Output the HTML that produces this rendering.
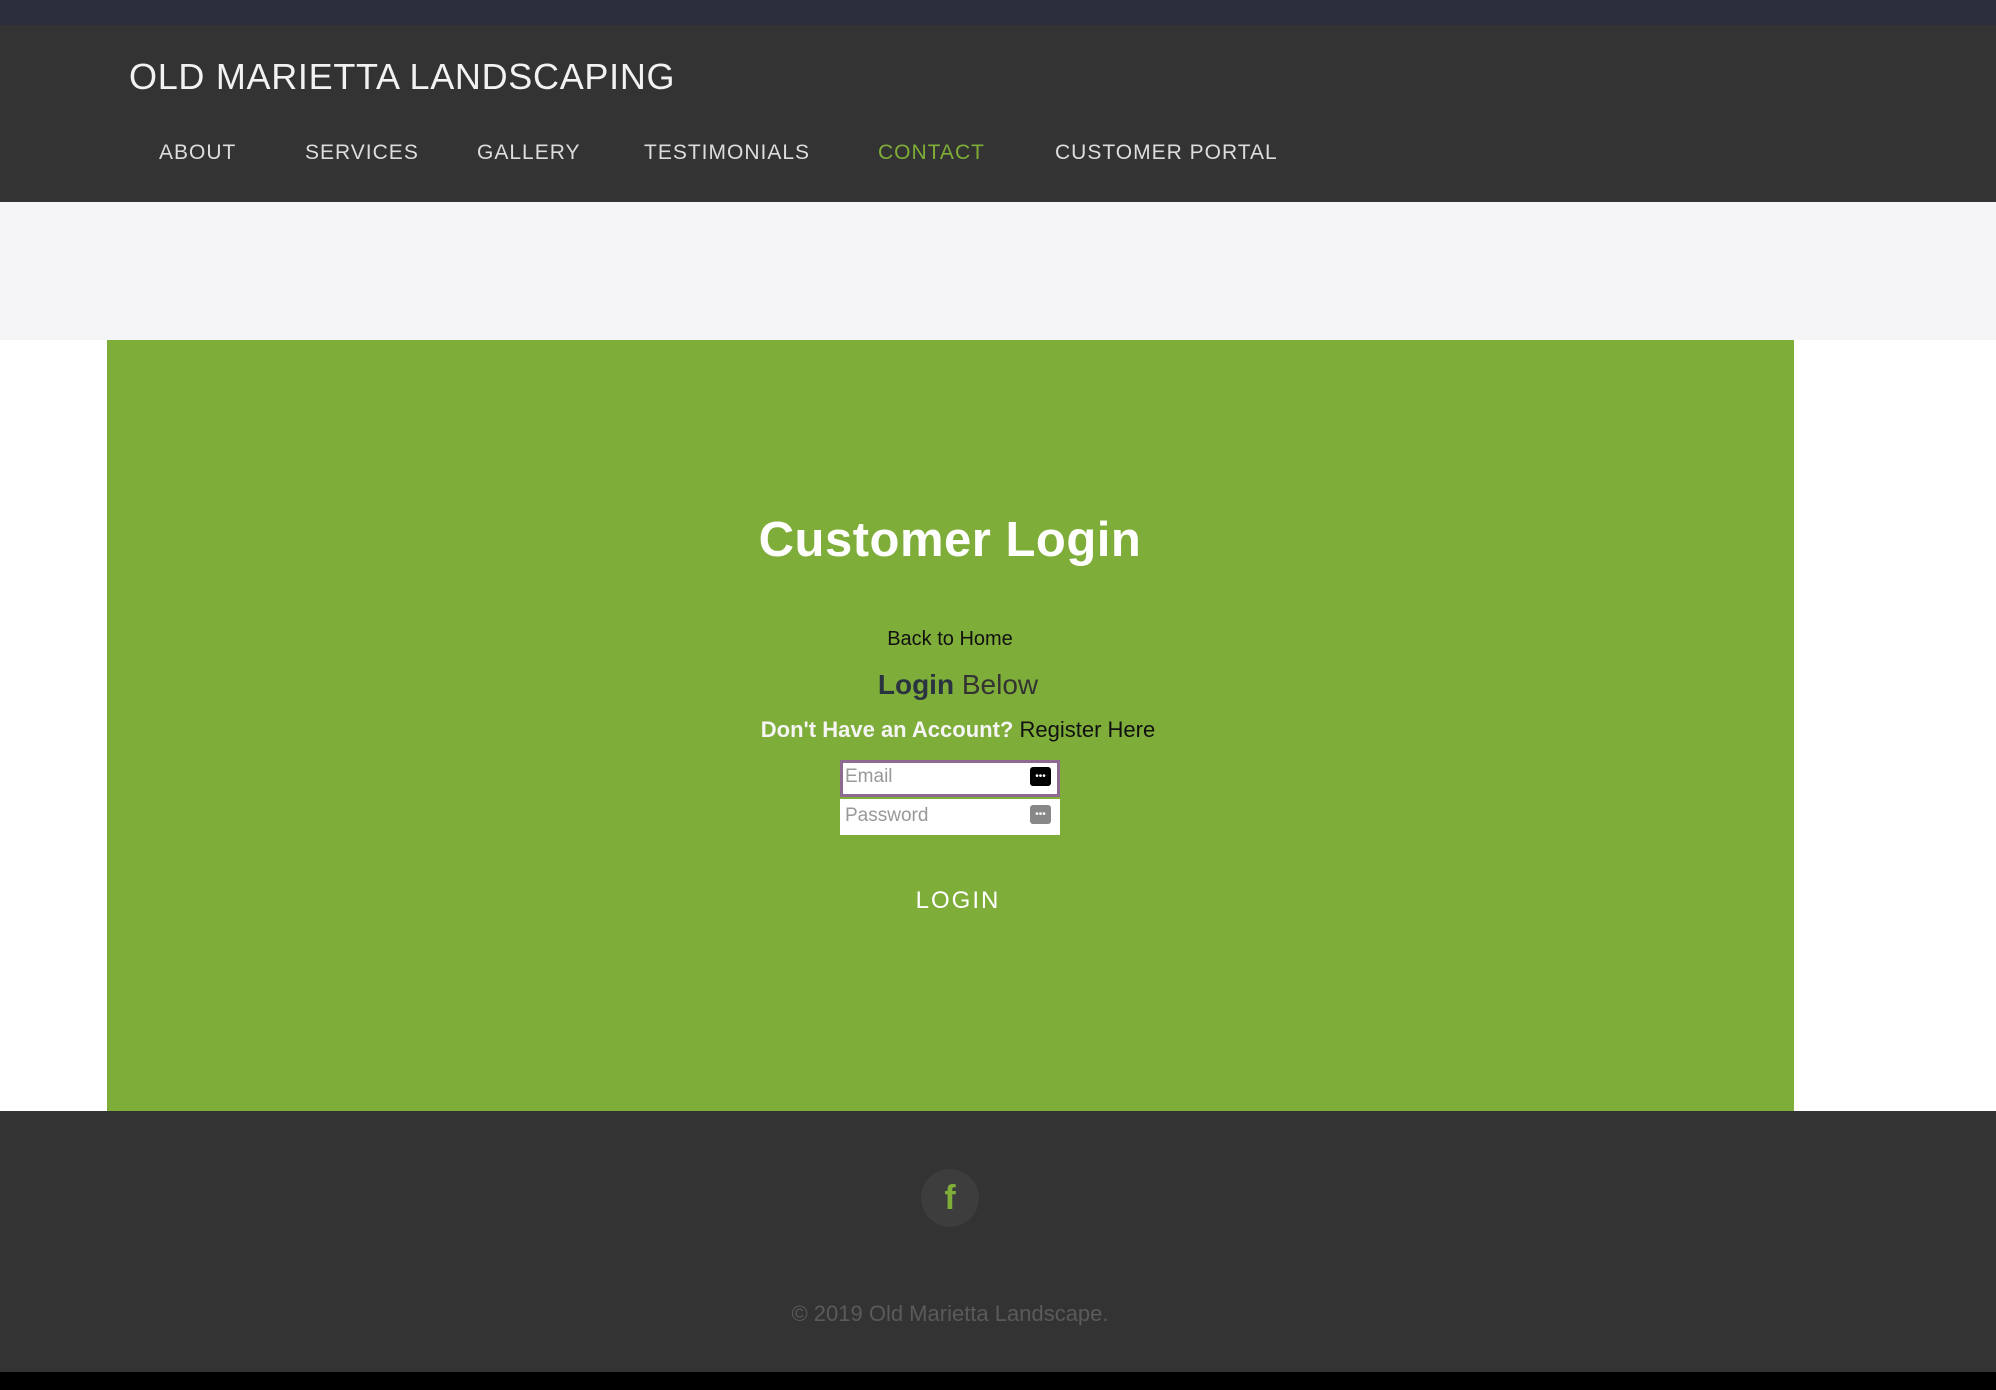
<!DOCTYPE html>
<html><head><meta charset="utf-8"><style>
*{margin:0;padding:0;box-sizing:border-box}
body{width:1996px;height:1390px;overflow:hidden;background:#fff;font-family:"Liberation Sans",sans-serif;position:relative}
.abs{position:absolute}
.c{position:absolute;left:0;width:1900px;text-align:center}
</style></head><body>
<div class="abs" style="left:0;top:0;width:1996px;height:25px;background:#2d2e3b"></div>
<div class="abs" style="left:0;top:25px;width:1996px;height:177px;background:#333"></div>
<div class="abs" style="left:129px;top:56px;color:#f2f2f2;font-size:36px;letter-spacing:0.7px;white-space:nowrap">OLD MARIETTA LANDSCAPING</div>
<div class="abs" style="top:141px;left:0;font-size:21px;letter-spacing:1px;color:#ddd;white-space:nowrap">
<span class="abs" style="left:159px">ABOUT</span>
<span class="abs" style="left:305px">SERVICES</span>
<span class="abs" style="left:477px">GALLERY</span>
<span class="abs" style="left:644px">TESTIMONIALS</span>
<span class="abs" style="left:878px;color:#7fae38">CONTACT</span>
<span class="abs" style="left:1055px">CUSTOMER PORTAL</span>
</div>
<div class="abs" style="left:0;top:202px;width:1996px;height:138px;background:#f5f5f7"></div>
<div class="abs" style="left:107px;top:340px;width:1687px;height:771px;background:#7fad39"></div>
<div class="c" style="top:512px;font-size:49px;color:#fff;font-weight:bold;letter-spacing:0.5px">Customer Login</div>
<div class="c" style="top:628px;font-size:20px;color:#111">Back to Home</div>
<div class="c" style="top:669px;font-size:28px;color:#333;left:8px"><b style="color:#2a3340">Login</b> Below</div>
<div class="c" style="top:717px;font-size:22px;color:#111;left:8px"><b style="color:#f5f5f5">Don't Have an Account?</b> Register Here</div>
<div class="abs" style="left:840px;top:760px;width:220px;height:37px;background:#fff;border:3px solid #8e6a93"></div>
<div class="abs" style="left:845px;top:766px;font-size:19px;color:#999">Email</div>
<div class="abs" style="left:1030px;top:767px;width:21px;height:19px;background:#000;border-radius:3px;color:#fff;font-size:10px;line-height:19px;text-align:center">•••</div>
<div class="abs" style="left:840px;top:799px;width:220px;height:36px;background:#fff"></div>
<div class="abs" style="left:845px;top:805px;font-size:19px;color:#999">Password</div>
<div class="abs" style="left:1030px;top:805px;width:21px;height:19px;background:#888;border-radius:3px;color:#fff;font-size:10px;line-height:19px;text-align:center">•••</div>
<div class="c" style="top:887px;font-size:24px;color:#fff;letter-spacing:2px;left:8px">LOGIN</div>
<div class="abs" style="left:0;top:1111px;width:1996px;height:261px;background:#333"></div>
<div class="abs" style="left:921px;top:1169px;width:58px;height:58px;border-radius:50%;background:#3d3d3d;color:#7fae38;font-size:34px;font-weight:bold;text-align:center;line-height:58px">f</div>
<div class="c" style="top:1301px;font-size:22px;color:#5a5a5a">© 2019 Old Marietta Landscape.</div>
<div class="abs" style="left:0;top:1372px;width:1996px;height:18px;background:#000"></div>
</body></html>
